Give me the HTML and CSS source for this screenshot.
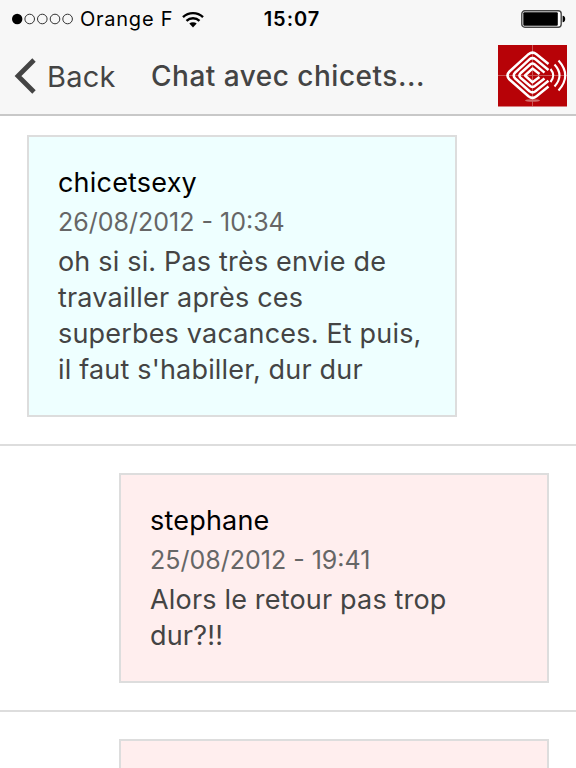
FILE: index.html
```html
<!DOCTYPE html>
<html lang="fr">
  <head>
    <meta charset="UTF-8" />
    <meta name="viewport" content="width=device-width, initial-scale=1.0" />
    <title>Chat avec chicetsexy</title>
    <link rel="stylesheet" href="styles.css">
  </head>
  <body>
    <header class="header">
      <div class="status-bar">
        <div class="carrier">
          <svg class="signal" width="61" height="12" viewBox="0 0 61 12">
            <circle cx="5.2" cy="6" r="5.2" />
            <g fill="none" stroke="#333" stroke-width="1">
              <circle cx="17.7" cy="6" r="4.8" />
              <circle cx="30.3" cy="6" r="4.8" />
              <circle cx="43" cy="6" r="4.8" />
              <circle cx="55.6" cy="6" r="4.8" />
            </g>
          </svg>
          <span class="carrier-name">Orange F</span>
          <svg class="wifi" width="22" height="17" viewBox="0 0 22 17">
            <g fill="none" stroke="#000" stroke-width="2.4">
              <path d="M1 6.2A14.4 14.4 0 0 1 21 6.2" />
              <path d="M4.5 9.9A9.4 9.4 0 0 1 17.5 9.9" />
            </g>
            <path d="M7.3 12.6A5.4 5.4 0 0 1 14.7 12.6L11 16.5Z" />
          </svg>
        </div>
        <span class="clock">15:07</span>
        <svg class="battery" width="45" height="18" viewBox="0 0 45 18">
          <rect x="0.8" y="0.8" width="39.4" height="16.4" rx="3" fill="#fff" stroke="#444" stroke-width="1.4" />
          <rect x="2.3" y="2.3" width="34.5" height="13.4" rx="1" />
          <path d="M41.6 5.8Q44.2 6 44.2 9T41.6 12.2Z" />
        </svg>
      </div>
      <div class="nav-bar">
        <a class="back" href="#">
          <svg width="22" height="36" viewBox="0 0 22 36">
            <path d="M20 2L4 18L20 34" fill="none" stroke="#444" stroke-width="4.8" />
          </svg>
          <span>Back</span>
        </a>
        <h1 class="title">Chat avec chicets...</h1>
        <svg class="logo" width="69" height="62" viewBox="0 0 69 62">
          <rect width="69" height="61.5" fill="#b70207" />
          <path d="M0 30.5H69M34.5 0V61" stroke="#c95555" stroke-width="1" />
          <ellipse cx="34.5" cy="55.5" rx="7.5" ry="1.3" fill="#d06a6a" />
          <g fill="none" stroke="#fff" stroke-width="2.5" stroke-linejoin="round">
            <path d="M50.5 19L38.5 9.2Q34.5 6 30.5 9.2L11.5 26.5Q7.5 30.5 11.5 34.5L30.5 51.3Q34.5 54.5 38.5 51.3L50.5 41.5" />
            <path d="M50.5 25L37.5 14.3Q34.5 12 31.5 14.3L17.2 27.5Q14.2 30.5 17.2 33.5L31.5 46.2Q34.5 48.5 37.5 46.2L50.5 35.8" />
            <path d="M46.5 27.6L36.5 19.3Q34.5 17.8 32.5 19.3L22.5 28.3Q20.2 30.5 22.5 32.7L32.5 41.2Q34.5 42.8 36.5 41.2L46.5 33.4" />
            <path d="M41.5 29L34.5 23.6L27 30.5L34.5 37.2L41.5 32" />
          </g>
          <g fill="none" stroke="#fff" stroke-width="2.1">
            <path d="M52.5 24Q58 30.5 52.5 37" />
            <path d="M56.5 19.5Q66.5 30.5 56.5 41.5" />
            <path d="M60.5 15.5Q74 30.5 60.5 45.5" />
          </g>
        </svg>
      </div>
    </header>

    <main class="messages">
      <div class="row">
        <div class="message received">
          <h2 class="name">chicetsexy</h2>
          <p class="date">26/08/2012 - 10:34</p>
          <p class="text">oh si si. Pas très envie de travailler après ces superbes vacances. Et puis, il faut s'habiller, dur dur</p>
        </div>
      </div>
      <div class="row">
        <div class="message sent">
          <h2 class="name">stephane</h2>
          <p class="date">25/08/2012 - 19:41</p>
          <p class="text">Alors le retour pas trop dur?!!</p>
        </div>
      </div>
      <div class="row">
        <div class="message sent"></div>
      </div>
    </main>
  </body>
</html>
```

FILE: styles.css
```css
* {
  box-sizing: border-box;
}

body {
  margin: 0;
  height: 768px;
  display: flex;
  flex-direction: column;
  overflow: hidden;
  font-family: Inter, "Liberation Sans", sans-serif;
  background-color: #fff;
  color: #444;
}

h1,
h2,
p {
  margin: 0;
  font-weight: 400;
}

svg {
  display: block;
  flex-shrink: 0;
}

/* Header */
.header {
  flex-shrink: 0;
  height: 116px;
  background-color: #f7f7f7;
  border-bottom: 2px solid #c8c8c8;
}

.status-bar {
  display: grid;
  grid-template-columns: 1fr auto 1fr;
  align-items: center;
  height: 38px;
  padding: 0 10px 0 12px;
  color: #000;
}

.carrier {
  display: flex;
  align-items: center;
}

.carrier-name {
  margin: 0 9px 0 7px;
  font-size: 20px;
  letter-spacing: 0.75px;
}

.clock {
  margin-left: 6px;
  font-size: 20px;
  font-weight: 600;
  letter-spacing: 1px;
}

.battery {
  justify-self: end;
}

.nav-bar {
  display: flex;
  align-items: center;
  height: 76px;
  padding: 0 9px 0 14px;
}

.back {
  display: flex;
  align-items: center;
  gap: 11px;
  width: 137px;
  color: #444;
  font-size: 29px;
  letter-spacing: 0.2px;
  text-decoration: none;
}

.title {
  flex: 1;
  font-size: 28px;
  font-weight: 500;
  letter-spacing: 0.5px;
  white-space: nowrap;
}

/* Messages */
.messages {
  flex: 1;
  min-height: 0;
  overflow: hidden;
}

.row {
  display: flex;
  padding: 27px;
  border-bottom: 2px solid #ddd;
}

.row:first-child {
  padding-top: 19px;
}

.message {
  width: 430px;
  min-height: 210px;
  padding: 28px 29px 27px;
  border: 2px solid #ddd;
}

.received {
  background-color: #eff;
}

.sent {
  margin-left: auto;
  background-color: #fee;
}

.name {
  color: #000;
  font-size: 27px;
  letter-spacing: 0.2px;
  line-height: 36px;
}

.date {
  color: #666;
  font-size: 25px;
  line-height: 42px;
}

.text {
  padding-top: 1px;
  font-size: 27px;
  letter-spacing: 0.18px;
  line-height: 36px;
}
```
